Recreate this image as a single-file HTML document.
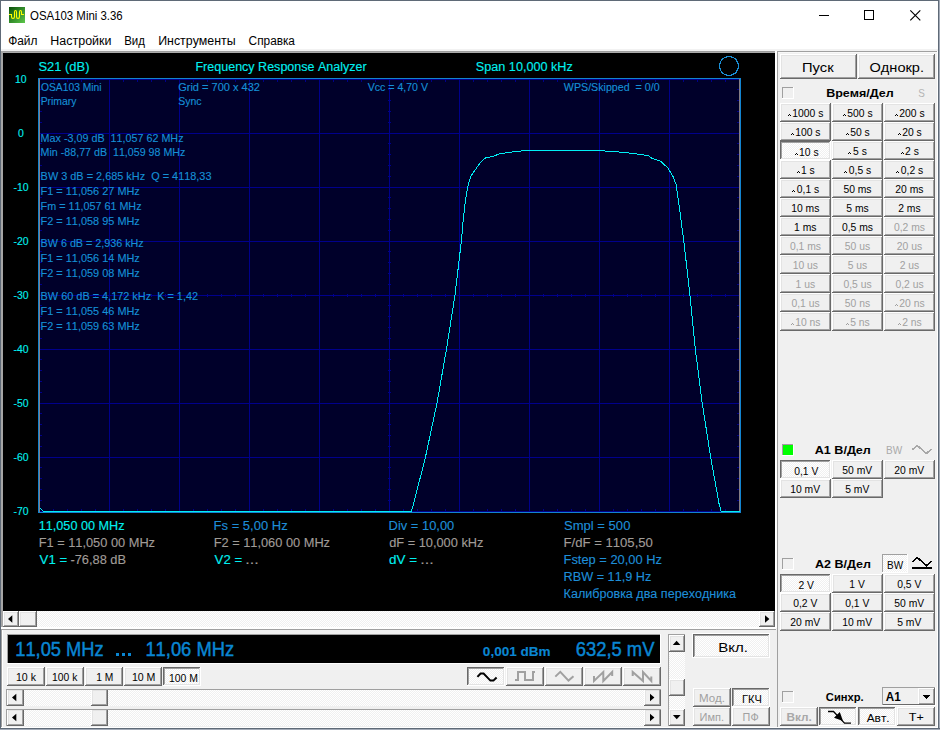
<!DOCTYPE html>
<html><head><meta charset="utf-8"><title>OSA103 Mini 3.36</title>
<style>
html,body{margin:0;padding:0;background:#f0f0f0;overflow:hidden}
svg{display:block}
text{font-family:"Liberation Sans", sans-serif;font-kerning:none;white-space:pre}
</style></head><body>
<svg width="940" height="730" viewBox="0 0 940 730" shape-rendering="crispEdges">
<rect x="0" y="0" width="940" height="730" fill="#f0f0f0" />
<rect x="1" y="1" width="937" height="49" fill="#ffffff" />
<rect x="1" y="49" width="937" height="2" fill="#f2f2f2" />
<rect x="0" y="0" width="940" height="1" fill="#5f6a77" />
<rect x="0" y="0" width="1" height="730" fill="#5f6a77" />
<rect x="938" y="0" width="1" height="730" fill="#5f6a77" />
<rect x="939" y="0" width="1" height="730" fill="#a3abb8" />
<rect x="0" y="728" width="940" height="1" fill="#5f6a77" />
<rect x="0" y="729" width="940" height="1" fill="#a3abb8" />
<defs><pattern id="chk" patternUnits="userSpaceOnUse" width="2" height="2"><rect width="2" height="2" fill="#f0f0f0"/><rect width="1" height="1" fill="#fff"/><rect x="1" y="1" width="1" height="1" fill="#fff"/></pattern><linearGradient id="ig" x1="0" y1="0" x2="1" y2="1">
<stop offset="0" stop-color="#0a4f0a"/><stop offset="1" stop-color="#5cc84a"/></linearGradient></defs>
<rect x="9" y="7" width="16" height="16" fill="url(#ig)" />
<path d="M9 14.5 H11.5 V16.8 Q11.5 18.5 13 18.5 Q14.5 18.5 14.5 16.8 V12.2 Q14.5 10.5 15.5 10.5 Q16.5 10.5 16.5 12.2 V16.8 Q16.5 18.5 18 18.5 Q19.5 18.5 19.5 16.8 V12.2 Q19.5 10.5 20.5 10.5 Q21.5 10.5 21.5 12.2 V14.5 H24" fill="none" stroke="#ffff00" stroke-width="1.1" shape-rendering="auto"/>
<text x="30.06" y="20" font-size="12" fill="#000000" textLength="92.64" lengthAdjust="spacingAndGlyphs">OSA103 Mini 3.36</text>
<rect x="819" y="15" width="10" height="1" fill="#000" />
<rect x="864.5" y="10.5" width="9" height="9" fill="none" stroke="#000" stroke-width="1"/>
<path d="M910.3 10.3 L920.3 20.3 M920.3 10.3 L910.3 20.3" stroke="#000" stroke-width="1.15" shape-rendering="auto"/>
<text x="8.16" y="45" font-size="12" fill="#000000" textLength="29.26" lengthAdjust="spacingAndGlyphs">Файл</text>
<text x="50.38" y="45" font-size="12" fill="#000000" textLength="61.09" lengthAdjust="spacingAndGlyphs">Настройки</text>
<text x="124.16" y="45" font-size="12" fill="#000000" textLength="20.74" lengthAdjust="spacingAndGlyphs">Вид</text>
<text x="158.18" y="45" font-size="12" fill="#000000" textLength="77.47" lengthAdjust="spacingAndGlyphs">Инструменты</text>
<text x="248.60" y="45" font-size="12" fill="#000000" textLength="46.20" lengthAdjust="spacingAndGlyphs">Справка</text>
<rect x="1" y="51" width="775" height="1" fill="#9c9c9c" />
<rect x="1" y="52" width="775" height="1" fill="#ababab" />
<rect x="1" y="51" width="2" height="577" fill="#a6a6a6" />
<rect x="775" y="51" width="2" height="577" fill="#ffffff" />
<rect x="3" y="53" width="772" height="558" fill="#000000" />
<rect x="38" y="78" width="703" height="435" fill="#1284d0" />
<rect x="39" y="79" width="701" height="433" fill="#00002a" />
<rect x="39" y="79" width="1" height="433" fill="#00008c" />
<rect x="109" y="79" width="1" height="433" fill="#00008c" />
<rect x="179" y="79" width="1" height="433" fill="#00008c" />
<rect x="249" y="79" width="1" height="433" fill="#00008c" />
<rect x="319" y="79" width="1" height="433" fill="#00008c" />
<rect x="389" y="79" width="1" height="433" fill="#00008c" />
<rect x="459" y="79" width="1" height="433" fill="#00008c" />
<rect x="529" y="79" width="1" height="433" fill="#00008c" />
<rect x="599" y="79" width="1" height="433" fill="#00008c" />
<rect x="669" y="79" width="1" height="433" fill="#00008c" />
<rect x="739" y="79" width="1" height="433" fill="#00008c" />
<rect x="39" y="79" width="701" height="1" fill="#00008c" />
<rect x="39" y="133" width="701" height="1" fill="#00008c" />
<rect x="39" y="187" width="701" height="1" fill="#00008c" />
<rect x="39" y="241" width="701" height="1" fill="#00008c" />
<rect x="39" y="295" width="701" height="1" fill="#00008c" />
<rect x="39" y="349" width="701" height="1" fill="#00008c" />
<rect x="39" y="403" width="701" height="1" fill="#00008c" />
<rect x="39" y="457" width="701" height="1" fill="#00008c" />
<rect x="39" y="511" width="701" height="1" fill="#00008c" />
<rect x="53" y="80" width="1" height="2" fill="#00008c" />
<rect x="53" y="509" width="1" height="2" fill="#00008c" />
<rect x="53" y="294" width="1" height="3" fill="#00008c" />
<rect x="67" y="80" width="1" height="2" fill="#00008c" />
<rect x="67" y="509" width="1" height="2" fill="#00008c" />
<rect x="67" y="294" width="1" height="3" fill="#00008c" />
<rect x="81" y="80" width="1" height="2" fill="#00008c" />
<rect x="81" y="509" width="1" height="2" fill="#00008c" />
<rect x="81" y="294" width="1" height="3" fill="#00008c" />
<rect x="95" y="80" width="1" height="2" fill="#00008c" />
<rect x="95" y="509" width="1" height="2" fill="#00008c" />
<rect x="95" y="294" width="1" height="3" fill="#00008c" />
<rect x="123" y="80" width="1" height="2" fill="#00008c" />
<rect x="123" y="509" width="1" height="2" fill="#00008c" />
<rect x="123" y="294" width="1" height="3" fill="#00008c" />
<rect x="137" y="80" width="1" height="2" fill="#00008c" />
<rect x="137" y="509" width="1" height="2" fill="#00008c" />
<rect x="137" y="294" width="1" height="3" fill="#00008c" />
<rect x="151" y="80" width="1" height="2" fill="#00008c" />
<rect x="151" y="509" width="1" height="2" fill="#00008c" />
<rect x="151" y="294" width="1" height="3" fill="#00008c" />
<rect x="165" y="80" width="1" height="2" fill="#00008c" />
<rect x="165" y="509" width="1" height="2" fill="#00008c" />
<rect x="165" y="294" width="1" height="3" fill="#00008c" />
<rect x="193" y="80" width="1" height="2" fill="#00008c" />
<rect x="193" y="509" width="1" height="2" fill="#00008c" />
<rect x="193" y="294" width="1" height="3" fill="#00008c" />
<rect x="207" y="80" width="1" height="2" fill="#00008c" />
<rect x="207" y="509" width="1" height="2" fill="#00008c" />
<rect x="207" y="294" width="1" height="3" fill="#00008c" />
<rect x="221" y="80" width="1" height="2" fill="#00008c" />
<rect x="221" y="509" width="1" height="2" fill="#00008c" />
<rect x="221" y="294" width="1" height="3" fill="#00008c" />
<rect x="235" y="80" width="1" height="2" fill="#00008c" />
<rect x="235" y="509" width="1" height="2" fill="#00008c" />
<rect x="235" y="294" width="1" height="3" fill="#00008c" />
<rect x="263" y="80" width="1" height="2" fill="#00008c" />
<rect x="263" y="509" width="1" height="2" fill="#00008c" />
<rect x="263" y="294" width="1" height="3" fill="#00008c" />
<rect x="277" y="80" width="1" height="2" fill="#00008c" />
<rect x="277" y="509" width="1" height="2" fill="#00008c" />
<rect x="277" y="294" width="1" height="3" fill="#00008c" />
<rect x="291" y="80" width="1" height="2" fill="#00008c" />
<rect x="291" y="509" width="1" height="2" fill="#00008c" />
<rect x="291" y="294" width="1" height="3" fill="#00008c" />
<rect x="305" y="80" width="1" height="2" fill="#00008c" />
<rect x="305" y="509" width="1" height="2" fill="#00008c" />
<rect x="305" y="294" width="1" height="3" fill="#00008c" />
<rect x="333" y="80" width="1" height="2" fill="#00008c" />
<rect x="333" y="509" width="1" height="2" fill="#00008c" />
<rect x="333" y="294" width="1" height="3" fill="#00008c" />
<rect x="347" y="80" width="1" height="2" fill="#00008c" />
<rect x="347" y="509" width="1" height="2" fill="#00008c" />
<rect x="347" y="294" width="1" height="3" fill="#00008c" />
<rect x="361" y="80" width="1" height="2" fill="#00008c" />
<rect x="361" y="509" width="1" height="2" fill="#00008c" />
<rect x="361" y="294" width="1" height="3" fill="#00008c" />
<rect x="375" y="80" width="1" height="2" fill="#00008c" />
<rect x="375" y="509" width="1" height="2" fill="#00008c" />
<rect x="375" y="294" width="1" height="3" fill="#00008c" />
<rect x="403" y="80" width="1" height="2" fill="#00008c" />
<rect x="403" y="509" width="1" height="2" fill="#00008c" />
<rect x="403" y="294" width="1" height="3" fill="#00008c" />
<rect x="417" y="80" width="1" height="2" fill="#00008c" />
<rect x="417" y="509" width="1" height="2" fill="#00008c" />
<rect x="417" y="294" width="1" height="3" fill="#00008c" />
<rect x="431" y="80" width="1" height="2" fill="#00008c" />
<rect x="431" y="509" width="1" height="2" fill="#00008c" />
<rect x="431" y="294" width="1" height="3" fill="#00008c" />
<rect x="445" y="80" width="1" height="2" fill="#00008c" />
<rect x="445" y="509" width="1" height="2" fill="#00008c" />
<rect x="445" y="294" width="1" height="3" fill="#00008c" />
<rect x="473" y="80" width="1" height="2" fill="#00008c" />
<rect x="473" y="509" width="1" height="2" fill="#00008c" />
<rect x="473" y="294" width="1" height="3" fill="#00008c" />
<rect x="487" y="80" width="1" height="2" fill="#00008c" />
<rect x="487" y="509" width="1" height="2" fill="#00008c" />
<rect x="487" y="294" width="1" height="3" fill="#00008c" />
<rect x="501" y="80" width="1" height="2" fill="#00008c" />
<rect x="501" y="509" width="1" height="2" fill="#00008c" />
<rect x="501" y="294" width="1" height="3" fill="#00008c" />
<rect x="515" y="80" width="1" height="2" fill="#00008c" />
<rect x="515" y="509" width="1" height="2" fill="#00008c" />
<rect x="515" y="294" width="1" height="3" fill="#00008c" />
<rect x="543" y="80" width="1" height="2" fill="#00008c" />
<rect x="543" y="509" width="1" height="2" fill="#00008c" />
<rect x="543" y="294" width="1" height="3" fill="#00008c" />
<rect x="557" y="80" width="1" height="2" fill="#00008c" />
<rect x="557" y="509" width="1" height="2" fill="#00008c" />
<rect x="557" y="294" width="1" height="3" fill="#00008c" />
<rect x="571" y="80" width="1" height="2" fill="#00008c" />
<rect x="571" y="509" width="1" height="2" fill="#00008c" />
<rect x="571" y="294" width="1" height="3" fill="#00008c" />
<rect x="585" y="80" width="1" height="2" fill="#00008c" />
<rect x="585" y="509" width="1" height="2" fill="#00008c" />
<rect x="585" y="294" width="1" height="3" fill="#00008c" />
<rect x="613" y="80" width="1" height="2" fill="#00008c" />
<rect x="613" y="509" width="1" height="2" fill="#00008c" />
<rect x="613" y="294" width="1" height="3" fill="#00008c" />
<rect x="627" y="80" width="1" height="2" fill="#00008c" />
<rect x="627" y="509" width="1" height="2" fill="#00008c" />
<rect x="627" y="294" width="1" height="3" fill="#00008c" />
<rect x="641" y="80" width="1" height="2" fill="#00008c" />
<rect x="641" y="509" width="1" height="2" fill="#00008c" />
<rect x="641" y="294" width="1" height="3" fill="#00008c" />
<rect x="655" y="80" width="1" height="2" fill="#00008c" />
<rect x="655" y="509" width="1" height="2" fill="#00008c" />
<rect x="655" y="294" width="1" height="3" fill="#00008c" />
<rect x="683" y="80" width="1" height="2" fill="#00008c" />
<rect x="683" y="509" width="1" height="2" fill="#00008c" />
<rect x="683" y="294" width="1" height="3" fill="#00008c" />
<rect x="697" y="80" width="1" height="2" fill="#00008c" />
<rect x="697" y="509" width="1" height="2" fill="#00008c" />
<rect x="697" y="294" width="1" height="3" fill="#00008c" />
<rect x="711" y="80" width="1" height="2" fill="#00008c" />
<rect x="711" y="509" width="1" height="2" fill="#00008c" />
<rect x="711" y="294" width="1" height="3" fill="#00008c" />
<rect x="725" y="80" width="1" height="2" fill="#00008c" />
<rect x="725" y="509" width="1" height="2" fill="#00008c" />
<rect x="725" y="294" width="1" height="3" fill="#00008c" />
<rect x="40" y="89" width="2" height="1" fill="#00008c" />
<rect x="737" y="89" width="2" height="1" fill="#00008c" />
<rect x="388" y="89" width="3" height="1" fill="#00008c" />
<rect x="40" y="100" width="2" height="1" fill="#00008c" />
<rect x="737" y="100" width="2" height="1" fill="#00008c" />
<rect x="388" y="100" width="3" height="1" fill="#00008c" />
<rect x="40" y="111" width="2" height="1" fill="#00008c" />
<rect x="737" y="111" width="2" height="1" fill="#00008c" />
<rect x="388" y="111" width="3" height="1" fill="#00008c" />
<rect x="40" y="122" width="2" height="1" fill="#00008c" />
<rect x="737" y="122" width="2" height="1" fill="#00008c" />
<rect x="388" y="122" width="3" height="1" fill="#00008c" />
<rect x="40" y="143" width="2" height="1" fill="#00008c" />
<rect x="737" y="143" width="2" height="1" fill="#00008c" />
<rect x="388" y="143" width="3" height="1" fill="#00008c" />
<rect x="40" y="154" width="2" height="1" fill="#00008c" />
<rect x="737" y="154" width="2" height="1" fill="#00008c" />
<rect x="388" y="154" width="3" height="1" fill="#00008c" />
<rect x="40" y="165" width="2" height="1" fill="#00008c" />
<rect x="737" y="165" width="2" height="1" fill="#00008c" />
<rect x="388" y="165" width="3" height="1" fill="#00008c" />
<rect x="40" y="176" width="2" height="1" fill="#00008c" />
<rect x="737" y="176" width="2" height="1" fill="#00008c" />
<rect x="388" y="176" width="3" height="1" fill="#00008c" />
<rect x="40" y="197" width="2" height="1" fill="#00008c" />
<rect x="737" y="197" width="2" height="1" fill="#00008c" />
<rect x="388" y="197" width="3" height="1" fill="#00008c" />
<rect x="40" y="208" width="2" height="1" fill="#00008c" />
<rect x="737" y="208" width="2" height="1" fill="#00008c" />
<rect x="388" y="208" width="3" height="1" fill="#00008c" />
<rect x="40" y="219" width="2" height="1" fill="#00008c" />
<rect x="737" y="219" width="2" height="1" fill="#00008c" />
<rect x="388" y="219" width="3" height="1" fill="#00008c" />
<rect x="40" y="230" width="2" height="1" fill="#00008c" />
<rect x="737" y="230" width="2" height="1" fill="#00008c" />
<rect x="388" y="230" width="3" height="1" fill="#00008c" />
<rect x="40" y="251" width="2" height="1" fill="#00008c" />
<rect x="737" y="251" width="2" height="1" fill="#00008c" />
<rect x="388" y="251" width="3" height="1" fill="#00008c" />
<rect x="40" y="262" width="2" height="1" fill="#00008c" />
<rect x="737" y="262" width="2" height="1" fill="#00008c" />
<rect x="388" y="262" width="3" height="1" fill="#00008c" />
<rect x="40" y="273" width="2" height="1" fill="#00008c" />
<rect x="737" y="273" width="2" height="1" fill="#00008c" />
<rect x="388" y="273" width="3" height="1" fill="#00008c" />
<rect x="40" y="284" width="2" height="1" fill="#00008c" />
<rect x="737" y="284" width="2" height="1" fill="#00008c" />
<rect x="388" y="284" width="3" height="1" fill="#00008c" />
<rect x="40" y="305" width="2" height="1" fill="#00008c" />
<rect x="737" y="305" width="2" height="1" fill="#00008c" />
<rect x="388" y="305" width="3" height="1" fill="#00008c" />
<rect x="40" y="316" width="2" height="1" fill="#00008c" />
<rect x="737" y="316" width="2" height="1" fill="#00008c" />
<rect x="388" y="316" width="3" height="1" fill="#00008c" />
<rect x="40" y="327" width="2" height="1" fill="#00008c" />
<rect x="737" y="327" width="2" height="1" fill="#00008c" />
<rect x="388" y="327" width="3" height="1" fill="#00008c" />
<rect x="40" y="338" width="2" height="1" fill="#00008c" />
<rect x="737" y="338" width="2" height="1" fill="#00008c" />
<rect x="388" y="338" width="3" height="1" fill="#00008c" />
<rect x="40" y="359" width="2" height="1" fill="#00008c" />
<rect x="737" y="359" width="2" height="1" fill="#00008c" />
<rect x="388" y="359" width="3" height="1" fill="#00008c" />
<rect x="40" y="370" width="2" height="1" fill="#00008c" />
<rect x="737" y="370" width="2" height="1" fill="#00008c" />
<rect x="388" y="370" width="3" height="1" fill="#00008c" />
<rect x="40" y="381" width="2" height="1" fill="#00008c" />
<rect x="737" y="381" width="2" height="1" fill="#00008c" />
<rect x="388" y="381" width="3" height="1" fill="#00008c" />
<rect x="40" y="392" width="2" height="1" fill="#00008c" />
<rect x="737" y="392" width="2" height="1" fill="#00008c" />
<rect x="388" y="392" width="3" height="1" fill="#00008c" />
<rect x="40" y="413" width="2" height="1" fill="#00008c" />
<rect x="737" y="413" width="2" height="1" fill="#00008c" />
<rect x="388" y="413" width="3" height="1" fill="#00008c" />
<rect x="40" y="424" width="2" height="1" fill="#00008c" />
<rect x="737" y="424" width="2" height="1" fill="#00008c" />
<rect x="388" y="424" width="3" height="1" fill="#00008c" />
<rect x="40" y="435" width="2" height="1" fill="#00008c" />
<rect x="737" y="435" width="2" height="1" fill="#00008c" />
<rect x="388" y="435" width="3" height="1" fill="#00008c" />
<rect x="40" y="446" width="2" height="1" fill="#00008c" />
<rect x="737" y="446" width="2" height="1" fill="#00008c" />
<rect x="388" y="446" width="3" height="1" fill="#00008c" />
<rect x="40" y="467" width="2" height="1" fill="#00008c" />
<rect x="737" y="467" width="2" height="1" fill="#00008c" />
<rect x="388" y="467" width="3" height="1" fill="#00008c" />
<rect x="40" y="478" width="2" height="1" fill="#00008c" />
<rect x="737" y="478" width="2" height="1" fill="#00008c" />
<rect x="388" y="478" width="3" height="1" fill="#00008c" />
<rect x="40" y="489" width="2" height="1" fill="#00008c" />
<rect x="737" y="489" width="2" height="1" fill="#00008c" />
<rect x="388" y="489" width="3" height="1" fill="#00008c" />
<rect x="40" y="500" width="2" height="1" fill="#00008c" />
<rect x="737" y="500" width="2" height="1" fill="#00008c" />
<rect x="388" y="500" width="3" height="1" fill="#00008c" />
<rect x="39" y="79" width="1" height="433" fill="#857d82" />
<rect x="739" y="79" width="1" height="433" fill="#857d82" />
<text x="38.41" y="71" font-size="12.5" fill="#00f0f0" stroke="#00f0f0" stroke-width="0.12" textLength="51.09" lengthAdjust="spacingAndGlyphs">S21 (dB)</text>
<text x="195.47" y="71" font-size="12.5" fill="#00f0f0" stroke="#00f0f0" stroke-width="0.12" textLength="171.24" lengthAdjust="spacingAndGlyphs">Frequency Response Analyzer</text>
<text x="475.83" y="71" font-size="12.5" fill="#00f0f0" stroke="#00f0f0" stroke-width="0.12" textLength="97.00" lengthAdjust="spacingAndGlyphs">Span 10,000 kHz</text>
<circle cx="729" cy="66" r="9.5" fill="none" stroke="#1a8ed4" stroke-width="1.2"/>
<text x="14.99" y="83" font-size="11" fill="#00f0f0" stroke="#00f0f0" stroke-width="0.12" textLength="11.62" lengthAdjust="spacingAndGlyphs">10</text>
<text x="18.09" y="137" font-size="11" fill="#00f0f0" stroke="#00f0f0" stroke-width="0.12" textLength="5.81" lengthAdjust="spacingAndGlyphs">0</text>
<text x="13.42" y="191" font-size="11" fill="#00f0f0" stroke="#00f0f0" stroke-width="0.12" textLength="15.10" lengthAdjust="spacingAndGlyphs">-10</text>
<text x="13.42" y="245" font-size="11" fill="#00f0f0" stroke="#00f0f0" stroke-width="0.12" textLength="15.10" lengthAdjust="spacingAndGlyphs">-20</text>
<text x="13.42" y="299" font-size="11" fill="#00f0f0" stroke="#00f0f0" stroke-width="0.12" textLength="15.10" lengthAdjust="spacingAndGlyphs">-30</text>
<text x="13.42" y="353" font-size="11" fill="#00f0f0" stroke="#00f0f0" stroke-width="0.12" textLength="15.10" lengthAdjust="spacingAndGlyphs">-40</text>
<text x="13.42" y="407" font-size="11" fill="#00f0f0" stroke="#00f0f0" stroke-width="0.12" textLength="15.10" lengthAdjust="spacingAndGlyphs">-50</text>
<text x="13.42" y="461" font-size="11" fill="#00f0f0" stroke="#00f0f0" stroke-width="0.12" textLength="15.10" lengthAdjust="spacingAndGlyphs">-60</text>
<text x="13.42" y="515" font-size="11" fill="#00f0f0" stroke="#00f0f0" stroke-width="0.12" textLength="15.10" lengthAdjust="spacingAndGlyphs">-70</text>
<text x="41.01" y="91" font-size="10.4" fill="#1590d6" stroke="#1590d6" stroke-width="0.12" textLength="60.58" lengthAdjust="spacingAndGlyphs">OSA103 Mini</text>
<text x="40.65" y="105" font-size="10.4" fill="#1590d6" stroke="#1590d6" stroke-width="0.12" textLength="35.87" lengthAdjust="spacingAndGlyphs">Primary</text>
<text x="178.15" y="91" font-size="10.4" fill="#1590d6" stroke="#1590d6" stroke-width="0.12" textLength="81.81" lengthAdjust="spacingAndGlyphs">Grid = 700 x 432</text>
<text x="178.22" y="105" font-size="10.4" fill="#1590d6" stroke="#1590d6" stroke-width="0.12" textLength="23.35" lengthAdjust="spacingAndGlyphs">Sync</text>
<text x="367.65" y="91" font-size="10.4" fill="#1590d6" stroke="#1590d6" stroke-width="0.12" textLength="60.39" lengthAdjust="spacingAndGlyphs">Vcc = 4,70 V</text>
<text x="563.85" y="91" font-size="10.4" fill="#1590d6" stroke="#1590d6" stroke-width="0.12" textLength="95.76" lengthAdjust="spacingAndGlyphs">WPS/Skipped  = 0/0</text>
<text x="40.62" y="142" font-size="10.4" fill="#1590d6" stroke="#1590d6" stroke-width="0.12" textLength="142.92" lengthAdjust="spacingAndGlyphs">Max -3,09 dB  11,057 62 MHz</text>
<text x="40.62" y="156" font-size="10.4" fill="#1590d6" stroke="#1590d6" stroke-width="0.12" textLength="144.71" lengthAdjust="spacingAndGlyphs">Min -88,77 dB  11,059 98 MHz</text>
<text x="40.61" y="180" font-size="10.4" fill="#1590d6" stroke="#1590d6" stroke-width="0.12" textLength="170.87" lengthAdjust="spacingAndGlyphs">BW 3 dB = 2,685 kHz  Q = 4118,33</text>
<text x="40.60" y="195" font-size="10.4" fill="#1590d6" stroke="#1590d6" stroke-width="0.12" textLength="99.24" lengthAdjust="spacingAndGlyphs">F1 = 11,056 27 MHz</text>
<text x="40.62" y="210" font-size="10.4" fill="#1590d6" stroke="#1590d6" stroke-width="0.12" textLength="100.92" lengthAdjust="spacingAndGlyphs">Fm = 11,057 61 MHz</text>
<text x="40.60" y="225" font-size="10.4" fill="#1590d6" stroke="#1590d6" stroke-width="0.12" textLength="99.24" lengthAdjust="spacingAndGlyphs">F2 = 11,058 95 MHz</text>
<text x="40.62" y="247" font-size="10.4" fill="#1590d6" stroke="#1590d6" stroke-width="0.12" textLength="103.12" lengthAdjust="spacingAndGlyphs">BW 6 dB = 2,936 kHz</text>
<text x="40.60" y="262" font-size="10.4" fill="#1590d6" stroke="#1590d6" stroke-width="0.12" textLength="99.24" lengthAdjust="spacingAndGlyphs">F1 = 11,056 14 MHz</text>
<text x="40.60" y="277" font-size="10.4" fill="#1590d6" stroke="#1590d6" stroke-width="0.12" textLength="99.24" lengthAdjust="spacingAndGlyphs">F2 = 11,059 08 MHz</text>
<text x="40.61" y="300" font-size="10.4" fill="#1590d6" stroke="#1590d6" stroke-width="0.12" textLength="157.44" lengthAdjust="spacingAndGlyphs">BW 60 dB = 4,172 kHz  K = 1,42</text>
<text x="40.60" y="315" font-size="10.4" fill="#1590d6" stroke="#1590d6" stroke-width="0.12" textLength="99.24" lengthAdjust="spacingAndGlyphs">F1 = 11,055 46 MHz</text>
<text x="40.60" y="330" font-size="10.4" fill="#1590d6" stroke="#1590d6" stroke-width="0.12" textLength="99.24" lengthAdjust="spacingAndGlyphs">F2 = 11,059 63 MHz</text>
<polyline points="39.5,508.5 40.8,508.5 42.5,510.5 43.2,511.5 411.3,511.5 413.2,505.0 415.4,497.0 418.5,484.0 421.0,475.0 425.5,457.0 437.0,403.0 446.5,349.0 455.0,295.0 461.5,240.0 463.0,222.0 465.0,204.0 467.0,190.7 468.5,183.8 470.5,177.0 474.0,171.5 480.8,162.0 485.6,157.8 493.0,156.4 500.0,153.7 507.9,152.5 515.5,151.5 526.6,150.5 595.0,150.5 614.0,151.5 624.0,152.5 633.0,153.5 640.0,154.5 648.0,155.5 652.3,158.5 660.5,161.2 668.0,168.0 672.9,176.3 675.9,183.8 677.0,190.7 679.7,209.9 681.8,226.3 683.7,240.0 689.9,295.0 695.3,349.0 702.2,403.0 710.6,457.0 719.3,505.0 721.3,511.5 739.5,511.5" fill="none" stroke="#00eef4" stroke-width="1" stroke-linejoin="round"/>
<text x="38.74" y="530" font-size="12" fill="#00f0f0" stroke="#00f0f0" stroke-width="0.12" textLength="85.79" lengthAdjust="spacingAndGlyphs">11,050 00 MHz</text>
<text x="38.65" y="547" font-size="12" fill="#a09c98" stroke="#a09c98" stroke-width="0.12" textLength="116.39" lengthAdjust="spacingAndGlyphs">F1 = 11,050 00 MHz</text>
<text x="39.64" y="564" font-size="12" fill="#00f0f0" stroke="#00f0f0" stroke-width="0.12" textLength="27.51" lengthAdjust="spacingAndGlyphs">V1 =</text>
<text x="70.43" y="564" font-size="12" fill="#a09c98" stroke="#a09c98" stroke-width="0.12" textLength="55.65" lengthAdjust="spacingAndGlyphs">-76,88 dB</text>
<text x="213.63" y="530" font-size="12" fill="#1e8ed8" stroke="#1e8ed8" stroke-width="0.12" textLength="74.01" lengthAdjust="spacingAndGlyphs">Fs = 5,00 Hz</text>
<text x="213.65" y="547" font-size="12" fill="#a09c98" stroke="#a09c98" stroke-width="0.12" textLength="116.39" lengthAdjust="spacingAndGlyphs">F2 = 11,060 00 MHz</text>
<text x="214.64" y="564" font-size="12" fill="#00f0f0" stroke="#00f0f0" stroke-width="0.12" textLength="27.51" lengthAdjust="spacingAndGlyphs">V2 =</text>
<text x="245.23" y="564" font-size="12" fill="#a09c98" stroke="#a09c98" stroke-width="0.12" textLength="13.45" lengthAdjust="spacingAndGlyphs">...</text>
<text x="388.64" y="530" font-size="12" fill="#1e8ed8" stroke="#1e8ed8" stroke-width="0.12" textLength="65.66" lengthAdjust="spacingAndGlyphs">Div = 10,00</text>
<text x="389.16" y="547" font-size="12" fill="#a09c98" stroke="#a09c98" stroke-width="0.12" textLength="94.28" lengthAdjust="spacingAndGlyphs">dF = 10,000 kHz</text>
<text x="389.14" y="564" font-size="12" fill="#00f0f0" stroke="#00f0f0" stroke-width="0.12" textLength="28.03" lengthAdjust="spacingAndGlyphs">dV =</text>
<text x="420.23" y="564" font-size="12" fill="#a09c98" stroke="#a09c98" stroke-width="0.12" textLength="13.45" lengthAdjust="spacingAndGlyphs">...</text>
<text x="564.01" y="530" font-size="12" fill="#1e8ed8" stroke="#1e8ed8" stroke-width="0.12" textLength="66.40" lengthAdjust="spacingAndGlyphs">Smpl = 500</text>
<text x="563.52" y="547" font-size="12" fill="#a09c98" stroke="#a09c98" stroke-width="0.12" textLength="89.39" lengthAdjust="spacingAndGlyphs">F/dF = 1105,50</text>
<text x="563.54" y="564" font-size="12" fill="#1e8ed8" stroke="#1e8ed8" stroke-width="0.12" textLength="98.50" lengthAdjust="spacingAndGlyphs">Fstep = 20,00 Hz</text>
<text x="563.56" y="581" font-size="12" fill="#1e8ed8" stroke="#1e8ed8" stroke-width="0.12" textLength="87.77" lengthAdjust="spacingAndGlyphs">RBW = 11,9 Hz</text>
<text x="563.57" y="598" font-size="12" fill="#1e8ed8" stroke="#1e8ed8" stroke-width="0.12" textLength="172.33" lengthAdjust="spacingAndGlyphs">Калибровка два переходника</text>
<rect x="3" y="611" width="772" height="16" fill="url(#chk)" />
<rect x="3" y="611" width="16" height="16" fill="#696969" />
<rect x="3" y="611" width="15" height="15" fill="#ffffff" />
<rect x="4" y="612" width="14" height="14" fill="#a0a0a0" />
<rect x="4" y="612" width="13" height="13" fill="#e3e3e3" />
<rect x="5" y="613" width="12" height="12" fill="#f0f0f0" />
<path d="M8 619.0 L12.3 615.2 L12.3 622.8 Z" fill="#000" shape-rendering="auto"/>
<rect x="759" y="611" width="16" height="16" fill="#696969" />
<rect x="759" y="611" width="15" height="15" fill="#ffffff" />
<rect x="760" y="612" width="14" height="14" fill="#a0a0a0" />
<rect x="760" y="612" width="13" height="13" fill="#e3e3e3" />
<rect x="761" y="613" width="12" height="12" fill="#f0f0f0" />
<path d="M769.4 619.0 L765 615.2 L765 622.8 Z" fill="#000" shape-rendering="auto"/>
<rect x="19" y="611" width="18" height="16" fill="#696969" />
<rect x="19" y="611" width="17" height="15" fill="#ffffff" />
<rect x="20" y="612" width="16" height="14" fill="#a0a0a0" />
<rect x="20" y="612" width="15" height="13" fill="#e3e3e3" />
<rect x="21" y="613" width="14" height="12" fill="#f0f0f0" />
<rect x="1" y="627" width="775" height="2" fill="#ffffff" />
<rect x="1" y="629" width="775" height="1" fill="#a0a0a0" />
<rect x="1" y="629" width="1" height="99" fill="#a0a0a0" />
<rect x="7" y="634" width="654" height="1" fill="#a0a0a0" />
<rect x="7" y="634" width="1" height="29" fill="#a0a0a0" />
<rect x="8" y="635" width="652" height="28" fill="#000000" />
<rect x="660" y="634" width="1" height="30" fill="#ffffff" />
<rect x="7" y="663" width="654" height="1" fill="#ffffff" />
<text x="15.21" y="656" font-size="20" fill="#0a86d2" stroke="#0a86d2" stroke-width="0.45" textLength="88.51" lengthAdjust="spacingAndGlyphs">11,05 MHz</text>
<rect x="116" y="653" width="3" height="3" fill="#0a86d2" />
<rect x="122" y="653" width="3" height="3" fill="#0a86d2" />
<rect x="128" y="653" width="3" height="3" fill="#0a86d2" />
<text x="145.40" y="656" font-size="20" fill="#0a86d2" stroke="#0a86d2" stroke-width="0.45" textLength="88.71" lengthAdjust="spacingAndGlyphs">11,06 MHz</text>
<text x="482.86" y="656" font-size="13" fill="#0a86d2" font-weight="bold" stroke="#0a86d2" stroke-width="0.12" textLength="67.78" lengthAdjust="spacingAndGlyphs">0,001 dBm</text>
<text x="575.66" y="656" font-size="20" fill="#0a86d2" stroke="#0a86d2" stroke-width="0.45" textLength="78.82" lengthAdjust="spacingAndGlyphs">632,5 mV</text>
<rect x="7" y="667" width="38" height="19" fill="#696969" />
<rect x="7" y="667" width="37" height="18" fill="#ffffff" />
<rect x="8" y="668" width="36" height="17" fill="#a0a0a0" />
<rect x="8" y="668" width="35" height="16" fill="#e3e3e3" />
<rect x="9" y="669" width="34" height="15" fill="#f0f0f0" />
<text x="15.99" y="681" font-size="11" fill="#000" textLength="19.99" lengthAdjust="spacingAndGlyphs">10 k</text>
<rect x="46" y="667" width="38" height="19" fill="#696969" />
<rect x="46" y="667" width="37" height="18" fill="#ffffff" />
<rect x="47" y="668" width="36" height="17" fill="#a0a0a0" />
<rect x="47" y="668" width="35" height="16" fill="#e3e3e3" />
<rect x="48" y="669" width="34" height="15" fill="#f0f0f0" />
<text x="52.11" y="681" font-size="11" fill="#000" textLength="25.27" lengthAdjust="spacingAndGlyphs">100 k</text>
<rect x="85" y="667" width="38" height="19" fill="#696969" />
<rect x="85" y="667" width="37" height="18" fill="#ffffff" />
<rect x="86" y="668" width="36" height="17" fill="#a0a0a0" />
<rect x="86" y="668" width="35" height="16" fill="#e3e3e3" />
<rect x="87" y="669" width="34" height="15" fill="#f0f0f0" />
<text x="96.22" y="681" font-size="11" fill="#000" textLength="17.13" lengthAdjust="spacingAndGlyphs">1 M</text>
<rect x="124" y="667" width="38" height="19" fill="#696969" />
<rect x="124" y="667" width="37" height="18" fill="#ffffff" />
<rect x="125" y="668" width="36" height="17" fill="#a0a0a0" />
<rect x="125" y="668" width="35" height="16" fill="#e3e3e3" />
<rect x="126" y="669" width="34" height="15" fill="#f0f0f0" />
<text x="131.89" y="681" font-size="11" fill="#000" textLength="23.58" lengthAdjust="spacingAndGlyphs">10 M</text>
<rect x="163" y="667" width="38" height="19" fill="#ffffff" />
<rect x="163" y="667" width="37" height="18" fill="#696969" />
<rect x="164" y="668" width="36" height="17" fill="#e3e3e3" />
<rect x="164" y="668" width="35" height="16" fill="#a0a0a0" />
<rect x="165" y="669" width="34" height="15" fill="url(#chk)" />
<text x="169.01" y="682" font-size="11" fill="#000" textLength="28.95" lengthAdjust="spacingAndGlyphs">100 M</text>
<rect x="467" y="667" width="38" height="19" fill="#ffffff" />
<rect x="467" y="667" width="37" height="18" fill="#696969" />
<rect x="468" y="668" width="36" height="17" fill="#e3e3e3" />
<rect x="468" y="668" width="35" height="16" fill="#a0a0a0" />
<rect x="469" y="669" width="34" height="15" fill="url(#chk)" />
<rect x="506" y="667" width="38" height="19" fill="#696969" />
<rect x="506" y="667" width="37" height="18" fill="#ffffff" />
<rect x="507" y="668" width="36" height="17" fill="#a0a0a0" />
<rect x="507" y="668" width="35" height="16" fill="#e3e3e3" />
<rect x="508" y="669" width="34" height="15" fill="#f0f0f0" />
<rect x="545" y="667" width="38" height="19" fill="#696969" />
<rect x="545" y="667" width="37" height="18" fill="#ffffff" />
<rect x="546" y="668" width="36" height="17" fill="#a0a0a0" />
<rect x="546" y="668" width="35" height="16" fill="#e3e3e3" />
<rect x="547" y="669" width="34" height="15" fill="#f0f0f0" />
<rect x="584" y="667" width="38" height="19" fill="#696969" />
<rect x="584" y="667" width="37" height="18" fill="#ffffff" />
<rect x="585" y="668" width="36" height="17" fill="#a0a0a0" />
<rect x="585" y="668" width="35" height="16" fill="#e3e3e3" />
<rect x="586" y="669" width="34" height="15" fill="#f0f0f0" />
<rect x="623" y="667" width="38" height="19" fill="#696969" />
<rect x="623" y="667" width="37" height="18" fill="#ffffff" />
<rect x="624" y="668" width="36" height="17" fill="#a0a0a0" />
<rect x="624" y="668" width="35" height="16" fill="#e3e3e3" />
<rect x="625" y="669" width="34" height="15" fill="#f0f0f0" />
<path d="M477.4 676.9 L480.6 673.6 H483.6 L490.4 680.6 H493.4 L496.6 677.5" fill="none" stroke="#000" stroke-width="2" shape-rendering="auto"/>
<path d="M515 680 H518 V672 H525 V680 H532.5 V672 H535" fill="none" stroke="#a0a0a0" stroke-width="2"/>
<path d="M555.3 676.6 L560.3 671.8 L568.5 680.6 L573.5 676.3" fill="none" stroke="#a0a0a0" stroke-width="2" shape-rendering="auto"/>
<path d="M594 676 V681 L603.3 672 V681 L612.2 672 V676" fill="none" stroke="#a0a0a0" stroke-width="2" shape-rendering="auto"/>
<path d="M632.7 676 V672 L643 681 V672 L651.3 681 V676.4" fill="none" stroke="#a0a0a0" stroke-width="2" shape-rendering="auto"/>
<rect x="7" y="689" width="654" height="17" fill="url(#chk)" />
<rect x="7" y="689" width="17" height="17" fill="#696969" />
<rect x="7" y="689" width="16" height="16" fill="#ffffff" />
<rect x="8" y="690" width="15" height="15" fill="#a0a0a0" />
<rect x="8" y="690" width="14" height="14" fill="#e3e3e3" />
<rect x="9" y="691" width="13" height="13" fill="#f0f0f0" />
<path d="M12 697.5 L16.3 693.7 L16.3 701.3 Z" fill="#000" shape-rendering="auto"/>
<rect x="644" y="689" width="17" height="17" fill="#696969" />
<rect x="644" y="689" width="16" height="16" fill="#ffffff" />
<rect x="645" y="690" width="15" height="15" fill="#a0a0a0" />
<rect x="645" y="690" width="14" height="14" fill="#e3e3e3" />
<rect x="646" y="691" width="13" height="13" fill="#f0f0f0" />
<path d="M654.4 697.5 L650 693.7 L650 701.3 Z" fill="#000" shape-rendering="auto"/>
<rect x="91" y="689" width="17" height="17" fill="#696969" />
<rect x="91" y="689" width="16" height="16" fill="#ffffff" />
<rect x="92" y="690" width="15" height="15" fill="#a0a0a0" />
<rect x="92" y="690" width="14" height="14" fill="#e3e3e3" />
<rect x="93" y="691" width="13" height="13" fill="#f0f0f0" />
<rect x="7" y="709" width="654" height="17" fill="url(#chk)" />
<rect x="7" y="709" width="17" height="17" fill="#696969" />
<rect x="7" y="709" width="16" height="16" fill="#ffffff" />
<rect x="8" y="710" width="15" height="15" fill="#a0a0a0" />
<rect x="8" y="710" width="14" height="14" fill="#e3e3e3" />
<rect x="9" y="711" width="13" height="13" fill="#f0f0f0" />
<path d="M12 717.5 L16.3 713.7 L16.3 721.3 Z" fill="#000" shape-rendering="auto"/>
<rect x="644" y="709" width="17" height="17" fill="#696969" />
<rect x="644" y="709" width="16" height="16" fill="#ffffff" />
<rect x="645" y="710" width="15" height="15" fill="#a0a0a0" />
<rect x="645" y="710" width="14" height="14" fill="#e3e3e3" />
<rect x="646" y="711" width="13" height="13" fill="#f0f0f0" />
<path d="M654.4 717.5 L650 713.7 L650 721.3 Z" fill="#000" shape-rendering="auto"/>
<rect x="91" y="709" width="17" height="17" fill="#696969" />
<rect x="91" y="709" width="16" height="16" fill="#ffffff" />
<rect x="92" y="710" width="15" height="15" fill="#a0a0a0" />
<rect x="92" y="710" width="14" height="14" fill="#e3e3e3" />
<rect x="93" y="711" width="13" height="13" fill="#f0f0f0" />
<rect x="6" y="689" width="655" height="1" fill="#a0a0a0" />
<rect x="6" y="709" width="655" height="1" fill="#a0a0a0" />
<rect x="6" y="689" width="1" height="17" fill="#a0a0a0" />
<rect x="6" y="709" width="1" height="17" fill="#a0a0a0" />
<rect x="2" y="630" width="1" height="97" fill="#ffffff" />
<rect x="1" y="727" width="776" height="1" fill="#ffffff" />
<rect x="668" y="634" width="17" height="92" fill="url(#chk)" />
<rect x="668" y="634" width="1" height="92" fill="#a0a0a0" />
<rect x="668" y="634" width="17" height="1" fill="#a0a0a0" />
<rect x="669" y="635" width="16" height="17" fill="#696969" />
<rect x="669" y="635" width="15" height="16" fill="#ffffff" />
<rect x="670" y="636" width="14" height="15" fill="#a0a0a0" />
<rect x="670" y="636" width="13" height="14" fill="#e3e3e3" />
<rect x="671" y="637" width="12" height="13" fill="#f0f0f0" />
<path d="M676.6 640.8 L680.4 645 L672.8 645 Z" fill="#000" shape-rendering="auto"/>
<rect x="669" y="679" width="16" height="17" fill="#696969" />
<rect x="669" y="679" width="15" height="16" fill="#ffffff" />
<rect x="670" y="680" width="14" height="15" fill="#a0a0a0" />
<rect x="670" y="680" width="13" height="14" fill="#e3e3e3" />
<rect x="671" y="681" width="12" height="13" fill="#f0f0f0" />
<rect x="669" y="709" width="16" height="17" fill="#696969" />
<rect x="669" y="709" width="15" height="16" fill="#ffffff" />
<rect x="670" y="710" width="14" height="15" fill="#a0a0a0" />
<rect x="670" y="710" width="13" height="14" fill="#e3e3e3" />
<rect x="671" y="711" width="12" height="13" fill="#f0f0f0" />
<path d="M676.75 719.2 L680.6 715 L672.9 715 Z" fill="#000" shape-rendering="auto"/>
<rect x="692" y="633" width="78" height="25" fill="#ffffff" />
<rect x="693" y="634" width="77" height="24" fill="#ffffff" />
<rect x="693" y="634" width="76" height="23" fill="#696969" />
<rect x="694" y="635" width="75" height="22" fill="#e3e3e3" />
<rect x="694" y="635" width="74" height="21" fill="#a0a0a0" />
<rect x="695" y="636" width="73" height="20" fill="url(#chk)" />
<text x="718.26" y="652" font-size="13" fill="#000" textLength="29.61" lengthAdjust="spacingAndGlyphs">Вкл.</text>
<rect x="693" y="688" width="38" height="19" fill="#696969" />
<rect x="693" y="688" width="37" height="18" fill="#ffffff" />
<rect x="694" y="689" width="36" height="17" fill="#a0a0a0" />
<rect x="694" y="689" width="35" height="16" fill="#e3e3e3" />
<rect x="695" y="690" width="34" height="15" fill="#f0f0f0" />
<text x="699.05" y="702" font-size="11" fill="#a0a0a0" textLength="26.00" lengthAdjust="spacingAndGlyphs">Мод.</text>
<rect x="732" y="688" width="38" height="19" fill="#ffffff" />
<rect x="732" y="688" width="37" height="18" fill="#696969" />
<rect x="733" y="689" width="36" height="17" fill="#e3e3e3" />
<rect x="733" y="689" width="35" height="16" fill="#a0a0a0" />
<rect x="734" y="690" width="34" height="15" fill="url(#chk)" />
<text x="742.09" y="703" font-size="11" fill="#000" textLength="19.81" lengthAdjust="spacingAndGlyphs">ГКЧ</text>
<rect x="693" y="707" width="38" height="19" fill="#696969" />
<rect x="693" y="707" width="37" height="18" fill="#ffffff" />
<rect x="694" y="708" width="36" height="17" fill="#a0a0a0" />
<rect x="694" y="708" width="35" height="16" fill="#e3e3e3" />
<rect x="695" y="709" width="34" height="15" fill="#f0f0f0" />
<text x="699.60" y="721" font-size="11" fill="#a0a0a0" textLength="24.40" lengthAdjust="spacingAndGlyphs">Имп.</text>
<rect x="732" y="707" width="38" height="19" fill="#696969" />
<rect x="732" y="707" width="37" height="18" fill="#ffffff" />
<rect x="733" y="708" width="36" height="17" fill="#a0a0a0" />
<rect x="733" y="708" width="35" height="16" fill="#e3e3e3" />
<rect x="734" y="709" width="34" height="15" fill="#f0f0f0" />
<text x="742.62" y="721" font-size="11" fill="#a0a0a0" textLength="16.00" lengthAdjust="spacingAndGlyphs">ПФ</text>
<rect x="777" y="51" width="161" height="677" fill="#f0f0f0" />
<rect x="777" y="51" width="160" height="1" fill="#a0a0a0" />
<rect x="777" y="51" width="1" height="676" fill="#a0a0a0" />
<rect x="778" y="52" width="159" height="1" fill="#f8f8f8" />
<rect x="937" y="51" width="1" height="677" fill="#ffffff" />
<rect x="777" y="727" width="161" height="1" fill="#ffffff" />
<rect x="780" y="54" width="77" height="25" fill="#696969" />
<rect x="780" y="54" width="76" height="24" fill="#ffffff" />
<rect x="781" y="55" width="75" height="23" fill="#a0a0a0" />
<rect x="781" y="55" width="74" height="22" fill="#e3e3e3" />
<rect x="782" y="56" width="73" height="21" fill="#f0f0f0" />
<text x="801.91" y="72" font-size="13" fill="#000" textLength="31.72" lengthAdjust="spacingAndGlyphs">Пуск</text>
<rect x="858" y="54" width="77" height="25" fill="#696969" />
<rect x="858" y="54" width="76" height="24" fill="#ffffff" />
<rect x="859" y="55" width="75" height="23" fill="#a0a0a0" />
<rect x="859" y="55" width="74" height="22" fill="#e3e3e3" />
<rect x="860" y="56" width="73" height="21" fill="#f0f0f0" />
<text x="869.51" y="72" font-size="13" fill="#000" textLength="54.52" lengthAdjust="spacingAndGlyphs">Однокр.</text>
<rect x="782" y="87" width="12" height="12" fill="#ffffff" />
<rect x="782" y="87" width="11" height="11" fill="#a0a0a0" />
<rect x="783" y="88" width="10" height="10" fill="#f0f0f0" />
<text x="826.16" y="97" font-size="11" fill="#000" font-weight="bold" textLength="67.51" lengthAdjust="spacingAndGlyphs">Время/Дел</text>
<text x="918.35" y="97" font-size="11" fill="#b4b4b4" textLength="6.60" lengthAdjust="spacingAndGlyphs">S</text>
<rect x="780" y="103" width="51" height="19" fill="#696969" />
<rect x="780" y="103" width="50" height="18" fill="#ffffff" />
<rect x="781" y="104" width="49" height="17" fill="#a0a0a0" />
<rect x="781" y="104" width="48" height="16" fill="#e3e3e3" />
<rect x="782" y="105" width="47" height="15" fill="#f0f0f0" />
<rect x="789" y="114" width="1" height="1" fill="#000" />
<rect x="788" y="115" width="1" height="1" fill="#000" />
<rect x="790" y="115" width="1" height="1" fill="#000" />
<text x="792.27" y="117" font-size="11" fill="#000" textLength="31.05" lengthAdjust="spacingAndGlyphs">1000 s</text>
<rect x="832" y="103" width="51" height="19" fill="#696969" />
<rect x="832" y="103" width="50" height="18" fill="#ffffff" />
<rect x="833" y="104" width="49" height="17" fill="#a0a0a0" />
<rect x="833" y="104" width="48" height="16" fill="#e3e3e3" />
<rect x="834" y="105" width="47" height="15" fill="#f0f0f0" />
<rect x="844" y="114" width="1" height="1" fill="#000" />
<rect x="843" y="115" width="1" height="1" fill="#000" />
<rect x="845" y="115" width="1" height="1" fill="#000" />
<text x="847.33" y="117" font-size="11" fill="#000" textLength="25.29" lengthAdjust="spacingAndGlyphs">500 s</text>
<rect x="884" y="103" width="51" height="19" fill="#696969" />
<rect x="884" y="103" width="50" height="18" fill="#ffffff" />
<rect x="885" y="104" width="49" height="17" fill="#a0a0a0" />
<rect x="885" y="104" width="48" height="16" fill="#e3e3e3" />
<rect x="886" y="105" width="47" height="15" fill="#f0f0f0" />
<rect x="896" y="114" width="1" height="1" fill="#000" />
<rect x="895" y="115" width="1" height="1" fill="#000" />
<rect x="897" y="115" width="1" height="1" fill="#000" />
<text x="899.28" y="117" font-size="11" fill="#000" textLength="25.29" lengthAdjust="spacingAndGlyphs">200 s</text>
<rect x="780" y="122" width="51" height="19" fill="#696969" />
<rect x="780" y="122" width="50" height="18" fill="#ffffff" />
<rect x="781" y="123" width="49" height="17" fill="#a0a0a0" />
<rect x="781" y="123" width="48" height="16" fill="#e3e3e3" />
<rect x="782" y="124" width="47" height="15" fill="#f0f0f0" />
<rect x="792" y="133" width="1" height="1" fill="#000" />
<rect x="791" y="134" width="1" height="1" fill="#000" />
<rect x="793" y="134" width="1" height="1" fill="#000" />
<text x="795.15" y="136" font-size="11" fill="#000" textLength="25.29" lengthAdjust="spacingAndGlyphs">100 s</text>
<rect x="832" y="122" width="51" height="19" fill="#696969" />
<rect x="832" y="122" width="50" height="18" fill="#ffffff" />
<rect x="833" y="123" width="49" height="17" fill="#a0a0a0" />
<rect x="833" y="123" width="48" height="16" fill="#e3e3e3" />
<rect x="834" y="124" width="47" height="15" fill="#f0f0f0" />
<rect x="847" y="133" width="1" height="1" fill="#000" />
<rect x="846" y="134" width="1" height="1" fill="#000" />
<rect x="848" y="134" width="1" height="1" fill="#000" />
<text x="850.21" y="136" font-size="11" fill="#000" textLength="19.54" lengthAdjust="spacingAndGlyphs">50 s</text>
<rect x="884" y="122" width="51" height="19" fill="#696969" />
<rect x="884" y="122" width="50" height="18" fill="#ffffff" />
<rect x="885" y="123" width="49" height="17" fill="#a0a0a0" />
<rect x="885" y="123" width="48" height="16" fill="#e3e3e3" />
<rect x="886" y="124" width="47" height="15" fill="#f0f0f0" />
<rect x="899" y="133" width="1" height="1" fill="#000" />
<rect x="898" y="134" width="1" height="1" fill="#000" />
<rect x="900" y="134" width="1" height="1" fill="#000" />
<text x="902.15" y="136" font-size="11" fill="#000" textLength="19.54" lengthAdjust="spacingAndGlyphs">20 s</text>
<rect x="780" y="141" width="51" height="19" fill="#ffffff" />
<rect x="780" y="141" width="50" height="18" fill="#696969" />
<rect x="781" y="142" width="49" height="17" fill="#e3e3e3" />
<rect x="781" y="142" width="48" height="16" fill="#a0a0a0" />
<rect x="782" y="143" width="47" height="15" fill="url(#chk)" />
<rect x="796" y="153" width="1" height="1" fill="#000" />
<rect x="795" y="154" width="1" height="1" fill="#000" />
<rect x="797" y="154" width="1" height="1" fill="#000" />
<text x="799.02" y="156" font-size="11" fill="#000" textLength="19.54" lengthAdjust="spacingAndGlyphs">10 s</text>
<rect x="832" y="141" width="51" height="19" fill="#696969" />
<rect x="832" y="141" width="50" height="18" fill="#ffffff" />
<rect x="833" y="142" width="49" height="17" fill="#a0a0a0" />
<rect x="833" y="142" width="48" height="16" fill="#e3e3e3" />
<rect x="834" y="143" width="47" height="15" fill="#f0f0f0" />
<rect x="849" y="152" width="1" height="1" fill="#000" />
<rect x="848" y="153" width="1" height="1" fill="#000" />
<rect x="850" y="153" width="1" height="1" fill="#000" />
<text x="853.08" y="155" font-size="11" fill="#000" textLength="13.79" lengthAdjust="spacingAndGlyphs">5 s</text>
<rect x="884" y="141" width="51" height="19" fill="#696969" />
<rect x="884" y="141" width="50" height="18" fill="#ffffff" />
<rect x="885" y="142" width="49" height="17" fill="#a0a0a0" />
<rect x="885" y="142" width="48" height="16" fill="#e3e3e3" />
<rect x="886" y="143" width="47" height="15" fill="#f0f0f0" />
<rect x="902" y="152" width="1" height="1" fill="#000" />
<rect x="901" y="153" width="1" height="1" fill="#000" />
<rect x="903" y="153" width="1" height="1" fill="#000" />
<text x="905.03" y="155" font-size="11" fill="#000" textLength="13.79" lengthAdjust="spacingAndGlyphs">2 s</text>
<rect x="780" y="160" width="51" height="19" fill="#696969" />
<rect x="780" y="160" width="50" height="18" fill="#ffffff" />
<rect x="781" y="161" width="49" height="17" fill="#a0a0a0" />
<rect x="781" y="161" width="48" height="16" fill="#e3e3e3" />
<rect x="782" y="162" width="47" height="15" fill="#f0f0f0" />
<rect x="798" y="171" width="1" height="1" fill="#000" />
<rect x="797" y="172" width="1" height="1" fill="#000" />
<rect x="799" y="172" width="1" height="1" fill="#000" />
<text x="800.90" y="174" font-size="11" fill="#000" textLength="13.79" lengthAdjust="spacingAndGlyphs">1 s</text>
<rect x="832" y="160" width="51" height="19" fill="#696969" />
<rect x="832" y="160" width="50" height="18" fill="#ffffff" />
<rect x="833" y="161" width="49" height="17" fill="#a0a0a0" />
<rect x="833" y="161" width="48" height="16" fill="#e3e3e3" />
<rect x="834" y="162" width="47" height="15" fill="#f0f0f0" />
<rect x="845" y="171" width="1" height="1" fill="#000" />
<rect x="844" y="172" width="1" height="1" fill="#000" />
<rect x="846" y="172" width="1" height="1" fill="#000" />
<text x="848.78" y="174" font-size="11" fill="#000" textLength="22.42" lengthAdjust="spacingAndGlyphs">0,5 s</text>
<rect x="884" y="160" width="51" height="19" fill="#696969" />
<rect x="884" y="160" width="50" height="18" fill="#ffffff" />
<rect x="885" y="161" width="49" height="17" fill="#a0a0a0" />
<rect x="885" y="161" width="48" height="16" fill="#e3e3e3" />
<rect x="886" y="162" width="47" height="15" fill="#f0f0f0" />
<rect x="897" y="171" width="1" height="1" fill="#000" />
<rect x="896" y="172" width="1" height="1" fill="#000" />
<rect x="898" y="172" width="1" height="1" fill="#000" />
<text x="900.78" y="174" font-size="11" fill="#000" textLength="22.42" lengthAdjust="spacingAndGlyphs">0,2 s</text>
<rect x="780" y="179" width="51" height="19" fill="#696969" />
<rect x="780" y="179" width="50" height="18" fill="#ffffff" />
<rect x="781" y="180" width="49" height="17" fill="#a0a0a0" />
<rect x="781" y="180" width="48" height="16" fill="#e3e3e3" />
<rect x="782" y="181" width="47" height="15" fill="#f0f0f0" />
<rect x="793" y="190" width="1" height="1" fill="#000" />
<rect x="792" y="191" width="1" height="1" fill="#000" />
<rect x="794" y="191" width="1" height="1" fill="#000" />
<text x="796.78" y="193" font-size="11" fill="#000" textLength="22.42" lengthAdjust="spacingAndGlyphs">0,1 s</text>
<rect x="832" y="179" width="51" height="19" fill="#696969" />
<rect x="832" y="179" width="50" height="18" fill="#ffffff" />
<rect x="833" y="180" width="49" height="17" fill="#a0a0a0" />
<rect x="833" y="180" width="48" height="16" fill="#e3e3e3" />
<rect x="834" y="181" width="47" height="15" fill="#f0f0f0" />
<text x="843.40" y="193" font-size="11" fill="#000" textLength="28.16" lengthAdjust="spacingAndGlyphs">50 ms</text>
<rect x="884" y="179" width="51" height="19" fill="#696969" />
<rect x="884" y="179" width="50" height="18" fill="#ffffff" />
<rect x="885" y="180" width="49" height="17" fill="#a0a0a0" />
<rect x="885" y="180" width="48" height="16" fill="#e3e3e3" />
<rect x="886" y="181" width="47" height="15" fill="#f0f0f0" />
<text x="895.35" y="193" font-size="11" fill="#000" textLength="28.16" lengthAdjust="spacingAndGlyphs">20 ms</text>
<rect x="780" y="198" width="51" height="19" fill="#696969" />
<rect x="780" y="198" width="50" height="18" fill="#ffffff" />
<rect x="781" y="199" width="49" height="17" fill="#a0a0a0" />
<rect x="781" y="199" width="48" height="16" fill="#e3e3e3" />
<rect x="782" y="200" width="47" height="15" fill="#f0f0f0" />
<text x="791.21" y="212" font-size="11" fill="#000" textLength="28.16" lengthAdjust="spacingAndGlyphs">10 ms</text>
<rect x="832" y="198" width="51" height="19" fill="#696969" />
<rect x="832" y="198" width="50" height="18" fill="#ffffff" />
<rect x="833" y="199" width="49" height="17" fill="#a0a0a0" />
<rect x="833" y="199" width="48" height="16" fill="#e3e3e3" />
<rect x="834" y="200" width="47" height="15" fill="#f0f0f0" />
<text x="846.28" y="212" font-size="11" fill="#000" textLength="22.41" lengthAdjust="spacingAndGlyphs">5 ms</text>
<rect x="884" y="198" width="51" height="19" fill="#696969" />
<rect x="884" y="198" width="50" height="18" fill="#ffffff" />
<rect x="885" y="199" width="49" height="17" fill="#a0a0a0" />
<rect x="885" y="199" width="48" height="16" fill="#e3e3e3" />
<rect x="886" y="200" width="47" height="15" fill="#f0f0f0" />
<text x="898.22" y="212" font-size="11" fill="#000" textLength="22.41" lengthAdjust="spacingAndGlyphs">2 ms</text>
<rect x="780" y="217" width="51" height="19" fill="#696969" />
<rect x="780" y="217" width="50" height="18" fill="#ffffff" />
<rect x="781" y="218" width="49" height="17" fill="#a0a0a0" />
<rect x="781" y="218" width="48" height="16" fill="#e3e3e3" />
<rect x="782" y="219" width="47" height="15" fill="#f0f0f0" />
<text x="794.09" y="231" font-size="11" fill="#000" textLength="22.41" lengthAdjust="spacingAndGlyphs">1 ms</text>
<rect x="832" y="217" width="51" height="19" fill="#696969" />
<rect x="832" y="217" width="50" height="18" fill="#ffffff" />
<rect x="833" y="218" width="49" height="17" fill="#a0a0a0" />
<rect x="833" y="218" width="48" height="16" fill="#e3e3e3" />
<rect x="834" y="219" width="47" height="15" fill="#f0f0f0" />
<text x="841.97" y="231" font-size="11" fill="#000" textLength="31.03" lengthAdjust="spacingAndGlyphs">0,5 ms</text>
<rect x="884" y="217" width="51" height="19" fill="#696969" />
<rect x="884" y="217" width="50" height="18" fill="#ffffff" />
<rect x="885" y="218" width="49" height="17" fill="#a0a0a0" />
<rect x="885" y="218" width="48" height="16" fill="#e3e3e3" />
<rect x="886" y="219" width="47" height="15" fill="#f0f0f0" />
<text x="893.97" y="231" font-size="11" fill="#a0a0a0" textLength="31.03" lengthAdjust="spacingAndGlyphs">0,2 ms</text>
<rect x="780" y="236" width="51" height="19" fill="#696969" />
<rect x="780" y="236" width="50" height="18" fill="#ffffff" />
<rect x="781" y="237" width="49" height="17" fill="#a0a0a0" />
<rect x="781" y="237" width="48" height="16" fill="#e3e3e3" />
<rect x="782" y="238" width="47" height="15" fill="#f0f0f0" />
<text x="789.97" y="250" font-size="11" fill="#a0a0a0" textLength="31.03" lengthAdjust="spacingAndGlyphs">0,1 ms</text>
<rect x="832" y="236" width="51" height="19" fill="#696969" />
<rect x="832" y="236" width="50" height="18" fill="#ffffff" />
<rect x="833" y="237" width="49" height="17" fill="#a0a0a0" />
<rect x="833" y="237" width="48" height="16" fill="#e3e3e3" />
<rect x="834" y="238" width="47" height="15" fill="#f0f0f0" />
<text x="844.83" y="250" font-size="11" fill="#a0a0a0" textLength="25.29" lengthAdjust="spacingAndGlyphs">50 us</text>
<rect x="884" y="236" width="51" height="19" fill="#696969" />
<rect x="884" y="236" width="50" height="18" fill="#ffffff" />
<rect x="885" y="237" width="49" height="17" fill="#a0a0a0" />
<rect x="885" y="237" width="48" height="16" fill="#e3e3e3" />
<rect x="886" y="238" width="47" height="15" fill="#f0f0f0" />
<text x="896.78" y="250" font-size="11" fill="#a0a0a0" textLength="25.29" lengthAdjust="spacingAndGlyphs">20 us</text>
<rect x="780" y="255" width="51" height="19" fill="#696969" />
<rect x="780" y="255" width="50" height="18" fill="#ffffff" />
<rect x="781" y="256" width="49" height="17" fill="#a0a0a0" />
<rect x="781" y="256" width="48" height="16" fill="#e3e3e3" />
<rect x="782" y="257" width="47" height="15" fill="#f0f0f0" />
<text x="792.65" y="269" font-size="11" fill="#a0a0a0" textLength="25.29" lengthAdjust="spacingAndGlyphs">10 us</text>
<rect x="832" y="255" width="51" height="19" fill="#696969" />
<rect x="832" y="255" width="50" height="18" fill="#ffffff" />
<rect x="833" y="256" width="49" height="17" fill="#a0a0a0" />
<rect x="833" y="256" width="48" height="16" fill="#e3e3e3" />
<rect x="834" y="257" width="47" height="15" fill="#f0f0f0" />
<text x="847.71" y="269" font-size="11" fill="#a0a0a0" textLength="19.54" lengthAdjust="spacingAndGlyphs">5 us</text>
<rect x="884" y="255" width="51" height="19" fill="#696969" />
<rect x="884" y="255" width="50" height="18" fill="#ffffff" />
<rect x="885" y="256" width="49" height="17" fill="#a0a0a0" />
<rect x="885" y="256" width="48" height="16" fill="#e3e3e3" />
<rect x="886" y="257" width="47" height="15" fill="#f0f0f0" />
<text x="899.65" y="269" font-size="11" fill="#a0a0a0" textLength="19.54" lengthAdjust="spacingAndGlyphs">2 us</text>
<rect x="780" y="274" width="51" height="19" fill="#696969" />
<rect x="780" y="274" width="50" height="18" fill="#ffffff" />
<rect x="781" y="275" width="49" height="17" fill="#a0a0a0" />
<rect x="781" y="275" width="48" height="16" fill="#e3e3e3" />
<rect x="782" y="276" width="47" height="15" fill="#f0f0f0" />
<text x="795.52" y="288" font-size="11" fill="#a0a0a0" textLength="19.54" lengthAdjust="spacingAndGlyphs">1 us</text>
<rect x="832" y="274" width="51" height="19" fill="#696969" />
<rect x="832" y="274" width="50" height="18" fill="#ffffff" />
<rect x="833" y="275" width="49" height="17" fill="#a0a0a0" />
<rect x="833" y="275" width="48" height="16" fill="#e3e3e3" />
<rect x="834" y="276" width="47" height="15" fill="#f0f0f0" />
<text x="843.40" y="288" font-size="11" fill="#a0a0a0" textLength="28.17" lengthAdjust="spacingAndGlyphs">0,5 us</text>
<rect x="884" y="274" width="51" height="19" fill="#696969" />
<rect x="884" y="274" width="50" height="18" fill="#ffffff" />
<rect x="885" y="275" width="49" height="17" fill="#a0a0a0" />
<rect x="885" y="275" width="48" height="16" fill="#e3e3e3" />
<rect x="886" y="276" width="47" height="15" fill="#f0f0f0" />
<text x="895.40" y="288" font-size="11" fill="#a0a0a0" textLength="28.17" lengthAdjust="spacingAndGlyphs">0,2 us</text>
<rect x="780" y="293" width="51" height="19" fill="#696969" />
<rect x="780" y="293" width="50" height="18" fill="#ffffff" />
<rect x="781" y="294" width="49" height="17" fill="#a0a0a0" />
<rect x="781" y="294" width="48" height="16" fill="#e3e3e3" />
<rect x="782" y="295" width="47" height="15" fill="#f0f0f0" />
<text x="791.40" y="307" font-size="11" fill="#a0a0a0" textLength="28.17" lengthAdjust="spacingAndGlyphs">0,1 us</text>
<rect x="832" y="293" width="51" height="19" fill="#696969" />
<rect x="832" y="293" width="50" height="18" fill="#ffffff" />
<rect x="833" y="294" width="49" height="17" fill="#a0a0a0" />
<rect x="833" y="294" width="48" height="16" fill="#e3e3e3" />
<rect x="834" y="295" width="47" height="15" fill="#f0f0f0" />
<text x="844.83" y="307" font-size="11" fill="#a0a0a0" textLength="25.29" lengthAdjust="spacingAndGlyphs">50 ns</text>
<rect x="884" y="293" width="51" height="19" fill="#696969" />
<rect x="884" y="293" width="50" height="18" fill="#ffffff" />
<rect x="885" y="294" width="49" height="17" fill="#a0a0a0" />
<rect x="885" y="294" width="48" height="16" fill="#e3e3e3" />
<rect x="886" y="295" width="47" height="15" fill="#f0f0f0" />
<rect x="896" y="304" width="1" height="1" fill="#a0a0a0" />
<rect x="895" y="305" width="1" height="1" fill="#a0a0a0" />
<rect x="897" y="305" width="1" height="1" fill="#a0a0a0" />
<text x="899.28" y="307" font-size="11" fill="#a0a0a0" textLength="25.29" lengthAdjust="spacingAndGlyphs">20 ns</text>
<rect x="780" y="312" width="51" height="19" fill="#696969" />
<rect x="780" y="312" width="50" height="18" fill="#ffffff" />
<rect x="781" y="313" width="49" height="17" fill="#a0a0a0" />
<rect x="781" y="313" width="48" height="16" fill="#e3e3e3" />
<rect x="782" y="314" width="47" height="15" fill="#f0f0f0" />
<rect x="792" y="323" width="1" height="1" fill="#a0a0a0" />
<rect x="791" y="324" width="1" height="1" fill="#a0a0a0" />
<rect x="793" y="324" width="1" height="1" fill="#a0a0a0" />
<text x="795.15" y="326" font-size="11" fill="#a0a0a0" textLength="25.29" lengthAdjust="spacingAndGlyphs">10 ns</text>
<rect x="832" y="312" width="51" height="19" fill="#696969" />
<rect x="832" y="312" width="50" height="18" fill="#ffffff" />
<rect x="833" y="313" width="49" height="17" fill="#a0a0a0" />
<rect x="833" y="313" width="48" height="16" fill="#e3e3e3" />
<rect x="834" y="314" width="47" height="15" fill="#f0f0f0" />
<rect x="847" y="323" width="1" height="1" fill="#a0a0a0" />
<rect x="846" y="324" width="1" height="1" fill="#a0a0a0" />
<rect x="848" y="324" width="1" height="1" fill="#a0a0a0" />
<text x="850.21" y="326" font-size="11" fill="#a0a0a0" textLength="19.54" lengthAdjust="spacingAndGlyphs">5 ns</text>
<rect x="884" y="312" width="51" height="19" fill="#696969" />
<rect x="884" y="312" width="50" height="18" fill="#ffffff" />
<rect x="885" y="313" width="49" height="17" fill="#a0a0a0" />
<rect x="885" y="313" width="48" height="16" fill="#e3e3e3" />
<rect x="886" y="314" width="47" height="15" fill="#f0f0f0" />
<rect x="899" y="323" width="1" height="1" fill="#a0a0a0" />
<rect x="898" y="324" width="1" height="1" fill="#a0a0a0" />
<rect x="900" y="324" width="1" height="1" fill="#a0a0a0" />
<text x="902.15" y="326" font-size="11" fill="#a0a0a0" textLength="19.54" lengthAdjust="spacingAndGlyphs">2 ns</text>
<rect x="782" y="444" width="12" height="12" fill="#ffffff" />
<rect x="782" y="444" width="11" height="11" fill="#a898a8" />
<rect x="783" y="445" width="10" height="10" fill="#00ff00" />
<text x="814.69" y="454" font-size="11" fill="#000" font-weight="bold" textLength="56.19" lengthAdjust="spacingAndGlyphs">A1 В/Дел</text>
<text x="886.08" y="454" font-size="11" fill="#aaaaaa" textLength="16.16" lengthAdjust="spacingAndGlyphs">BW</text>
<polyline points="912.4,449.6 917.2,445.5 926.4,453.4 931.5,449.3" fill="none" stroke="#a8a8a8" stroke-width="1.6"/>
<rect x="780" y="460" width="51" height="19" fill="#ffffff" />
<rect x="780" y="460" width="50" height="18" fill="#696969" />
<rect x="781" y="461" width="49" height="17" fill="#e3e3e3" />
<rect x="781" y="461" width="48" height="16" fill="#a0a0a0" />
<rect x="782" y="462" width="47" height="15" fill="url(#chk)" />
<text x="794.25" y="475" font-size="11" fill="#000" textLength="24.14" lengthAdjust="spacingAndGlyphs">0,1 V</text>
<rect x="832" y="460" width="51" height="19" fill="#696969" />
<rect x="832" y="460" width="50" height="18" fill="#ffffff" />
<rect x="833" y="461" width="49" height="17" fill="#a0a0a0" />
<rect x="833" y="461" width="48" height="16" fill="#e3e3e3" />
<rect x="834" y="462" width="47" height="15" fill="#f0f0f0" />
<text x="842.37" y="474" font-size="11" fill="#000" textLength="29.88" lengthAdjust="spacingAndGlyphs">50 mV</text>
<rect x="884" y="460" width="51" height="19" fill="#696969" />
<rect x="884" y="460" width="50" height="18" fill="#ffffff" />
<rect x="885" y="461" width="49" height="17" fill="#a0a0a0" />
<rect x="885" y="461" width="48" height="16" fill="#e3e3e3" />
<rect x="886" y="462" width="47" height="15" fill="#f0f0f0" />
<text x="894.32" y="474" font-size="11" fill="#000" textLength="29.88" lengthAdjust="spacingAndGlyphs">20 mV</text>
<rect x="780" y="479" width="51" height="19" fill="#696969" />
<rect x="780" y="479" width="50" height="18" fill="#ffffff" />
<rect x="781" y="480" width="49" height="17" fill="#a0a0a0" />
<rect x="781" y="480" width="48" height="16" fill="#e3e3e3" />
<rect x="782" y="481" width="47" height="15" fill="#f0f0f0" />
<text x="790.19" y="493" font-size="11" fill="#000" textLength="29.88" lengthAdjust="spacingAndGlyphs">10 mV</text>
<rect x="832" y="479" width="51" height="19" fill="#696969" />
<rect x="832" y="479" width="50" height="18" fill="#ffffff" />
<rect x="833" y="480" width="49" height="17" fill="#a0a0a0" />
<rect x="833" y="480" width="48" height="16" fill="#e3e3e3" />
<rect x="834" y="481" width="47" height="15" fill="#f0f0f0" />
<text x="845.25" y="493" font-size="11" fill="#000" textLength="24.13" lengthAdjust="spacingAndGlyphs">5 mV</text>
<rect x="782" y="558" width="12" height="12" fill="#ffffff" />
<rect x="782" y="558" width="11" height="11" fill="#a0a0a0" />
<rect x="783" y="559" width="10" height="10" fill="#f0f0f0" />
<text x="814.99" y="568" font-size="11" fill="#000" font-weight="bold" textLength="55.89" lengthAdjust="spacingAndGlyphs">A2 В/Дел</text>
<rect x="882" y="554" width="26" height="19" fill="#ffffff" />
<rect x="882" y="554" width="25" height="18" fill="#a0a0a0" />
<rect x="883" y="555" width="24" height="17" fill="url(#chk)" />
<text x="887.08" y="569" font-size="11" fill="#000" textLength="16.05" lengthAdjust="spacingAndGlyphs">BW</text>
<polyline points="912.4,562.3 917.2,557.5 926.4,565.6 931.5,561.3" fill="none" stroke="#000" stroke-width="1.6"/>
<rect x="912" y="567" width="20" height="2" fill="#000" />
<rect x="780" y="574" width="51" height="19" fill="#ffffff" />
<rect x="780" y="574" width="50" height="18" fill="#696969" />
<rect x="781" y="575" width="49" height="17" fill="#e3e3e3" />
<rect x="781" y="575" width="48" height="16" fill="#a0a0a0" />
<rect x="782" y="576" width="47" height="15" fill="url(#chk)" />
<text x="798.50" y="589" font-size="11" fill="#000" textLength="15.52" lengthAdjust="spacingAndGlyphs">2 V</text>
<rect x="832" y="574" width="51" height="19" fill="#696969" />
<rect x="832" y="574" width="50" height="18" fill="#ffffff" />
<rect x="833" y="575" width="49" height="17" fill="#a0a0a0" />
<rect x="833" y="575" width="48" height="16" fill="#e3e3e3" />
<rect x="834" y="576" width="47" height="15" fill="#f0f0f0" />
<text x="849.37" y="588" font-size="11" fill="#000" textLength="15.52" lengthAdjust="spacingAndGlyphs">1 V</text>
<rect x="884" y="574" width="51" height="19" fill="#696969" />
<rect x="884" y="574" width="50" height="18" fill="#ffffff" />
<rect x="885" y="575" width="49" height="17" fill="#a0a0a0" />
<rect x="885" y="575" width="48" height="16" fill="#e3e3e3" />
<rect x="886" y="576" width="47" height="15" fill="#f0f0f0" />
<text x="897.25" y="588" font-size="11" fill="#000" textLength="24.14" lengthAdjust="spacingAndGlyphs">0,5 V</text>
<rect x="780" y="593" width="51" height="19" fill="#696969" />
<rect x="780" y="593" width="50" height="18" fill="#ffffff" />
<rect x="781" y="594" width="49" height="17" fill="#a0a0a0" />
<rect x="781" y="594" width="48" height="16" fill="#e3e3e3" />
<rect x="782" y="595" width="47" height="15" fill="#f0f0f0" />
<text x="793.25" y="607" font-size="11" fill="#000" textLength="24.14" lengthAdjust="spacingAndGlyphs">0,2 V</text>
<rect x="832" y="593" width="51" height="19" fill="#696969" />
<rect x="832" y="593" width="50" height="18" fill="#ffffff" />
<rect x="833" y="594" width="49" height="17" fill="#a0a0a0" />
<rect x="833" y="594" width="48" height="16" fill="#e3e3e3" />
<rect x="834" y="595" width="47" height="15" fill="#f0f0f0" />
<text x="845.25" y="607" font-size="11" fill="#000" textLength="24.14" lengthAdjust="spacingAndGlyphs">0,1 V</text>
<rect x="884" y="593" width="51" height="19" fill="#696969" />
<rect x="884" y="593" width="50" height="18" fill="#ffffff" />
<rect x="885" y="594" width="49" height="17" fill="#a0a0a0" />
<rect x="885" y="594" width="48" height="16" fill="#e3e3e3" />
<rect x="886" y="595" width="47" height="15" fill="#f0f0f0" />
<text x="894.37" y="607" font-size="11" fill="#000" textLength="29.88" lengthAdjust="spacingAndGlyphs">50 mV</text>
<rect x="780" y="612" width="51" height="19" fill="#696969" />
<rect x="780" y="612" width="50" height="18" fill="#ffffff" />
<rect x="781" y="613" width="49" height="17" fill="#a0a0a0" />
<rect x="781" y="613" width="48" height="16" fill="#e3e3e3" />
<rect x="782" y="614" width="47" height="15" fill="#f0f0f0" />
<text x="790.32" y="626" font-size="11" fill="#000" textLength="29.88" lengthAdjust="spacingAndGlyphs">20 mV</text>
<rect x="832" y="612" width="51" height="19" fill="#696969" />
<rect x="832" y="612" width="50" height="18" fill="#ffffff" />
<rect x="833" y="613" width="49" height="17" fill="#a0a0a0" />
<rect x="833" y="613" width="48" height="16" fill="#e3e3e3" />
<rect x="834" y="614" width="47" height="15" fill="#f0f0f0" />
<text x="842.19" y="626" font-size="11" fill="#000" textLength="29.88" lengthAdjust="spacingAndGlyphs">10 mV</text>
<rect x="884" y="612" width="51" height="19" fill="#696969" />
<rect x="884" y="612" width="50" height="18" fill="#ffffff" />
<rect x="885" y="613" width="49" height="17" fill="#a0a0a0" />
<rect x="885" y="613" width="48" height="16" fill="#e3e3e3" />
<rect x="886" y="614" width="47" height="15" fill="#f0f0f0" />
<text x="897.25" y="626" font-size="11" fill="#000" textLength="24.13" lengthAdjust="spacingAndGlyphs">5 mV</text>
<rect x="782" y="691" width="12" height="12" fill="#ffffff" />
<rect x="782" y="691" width="11" height="11" fill="#a0a0a0" />
<rect x="783" y="692" width="10" height="10" fill="#f0f0f0" />
<text x="825.84" y="701" font-size="11" fill="#000" font-weight="bold" textLength="37.83" lengthAdjust="spacingAndGlyphs">Синхр.</text>
<rect x="882" y="687" width="54" height="19" fill="#ffffff" />
<rect x="882" y="687" width="53" height="18" fill="#a0a0a0" />
<rect x="883" y="688" width="52" height="17" fill="#696969" />
<rect x="883" y="688" width="51" height="16" fill="#f0f0f0" />
<rect x="884" y="689" width="50" height="15" fill="#f0f0f0" />
<rect x="918" y="688" width="17" height="17" fill="#696969" />
<rect x="918" y="688" width="16" height="16" fill="#ffffff" />
<rect x="919" y="689" width="15" height="15" fill="#a0a0a0" />
<rect x="919" y="689" width="14" height="14" fill="#e3e3e3" />
<rect x="920" y="690" width="13" height="13" fill="#f0f0f0" />
<path d="M922.5 694.5 L930.5 694.5 L926.5 698.8 Z" fill="#000"/>
<text x="885.71" y="701" font-size="12" fill="#000" font-weight="bold" textLength="14.92" lengthAdjust="spacingAndGlyphs">A1</text>
<rect x="780" y="707" width="38" height="19" fill="#696969" />
<rect x="780" y="707" width="37" height="18" fill="#ffffff" />
<rect x="781" y="708" width="36" height="17" fill="#a0a0a0" />
<rect x="781" y="708" width="35" height="16" fill="#e3e3e3" />
<rect x="782" y="709" width="34" height="15" fill="#f0f0f0" />
<text x="786.51" y="721" font-size="11" fill="#a8a8a8" font-weight="bold" textLength="25.20" lengthAdjust="spacingAndGlyphs">Вкл.</text>
<rect x="819" y="707" width="38" height="19" fill="#ffffff" />
<rect x="819" y="707" width="37" height="18" fill="#696969" />
<rect x="820" y="708" width="36" height="17" fill="#e3e3e3" />
<rect x="820" y="708" width="35" height="16" fill="#a0a0a0" />
<rect x="821" y="709" width="34" height="15" fill="url(#chk)" />
<path d="M828 711.5 H833.5 L844.5 723.2 H851" fill="none" stroke="#000" stroke-width="1.3" shape-rendering="auto"/>
<path d="M839.8 712 L834 717.8 L843 721 Z" fill="#000" shape-rendering="auto"/>
<rect x="858" y="707" width="38" height="19" fill="#ffffff" />
<rect x="858" y="707" width="37" height="18" fill="#696969" />
<rect x="859" y="708" width="36" height="17" fill="#e3e3e3" />
<rect x="859" y="708" width="35" height="16" fill="#a0a0a0" />
<rect x="860" y="709" width="34" height="15" fill="url(#chk)" />
<text x="866.68" y="722" font-size="11" fill="#000" textLength="23.01" lengthAdjust="spacingAndGlyphs">Авт.</text>
<rect x="897" y="707" width="38" height="19" fill="#696969" />
<rect x="897" y="707" width="37" height="18" fill="#ffffff" />
<rect x="898" y="708" width="36" height="17" fill="#a0a0a0" />
<rect x="898" y="708" width="35" height="16" fill="#e3e3e3" />
<rect x="899" y="709" width="34" height="15" fill="#f0f0f0" />
<text x="908.72" y="721" font-size="11" fill="#000" textLength="15.00" lengthAdjust="spacingAndGlyphs">T+</text>
</svg>
</body></html>
